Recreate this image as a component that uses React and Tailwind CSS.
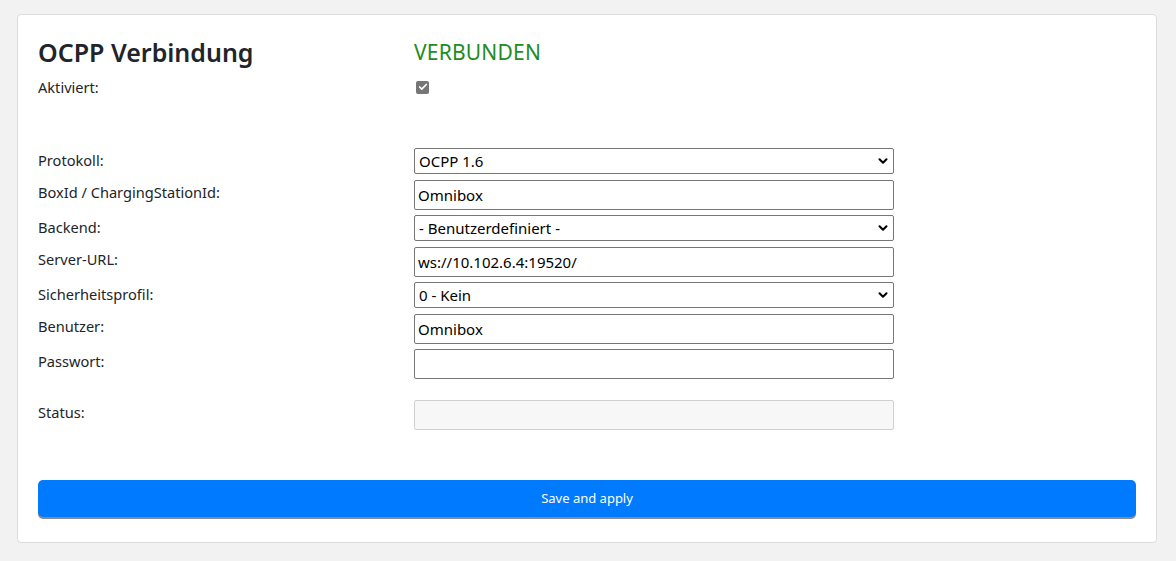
import { ChevronDown, Check } from "lucide-react"

const font = { fontFamily: '"Noto Sans", "Open Sans", sans-serif' }

const SelectBox = ({ value }) => (
  <div className="relative h-[26px] w-[480px] border border-[#767676] rounded-[2px] bg-white flex items-center pl-[4px] text-[15px] text-black">
    <span>{value}</span>
    <ChevronDown className="absolute right-[3px] top-[5px] w-[14px] h-[14px]" strokeWidth={3.5} />
  </div>
)

const TextBox = ({ value, disabled }) => (
  <div
    className={
      disabled
        ? "h-[30px] w-[480px] border border-[#d0d0d0] rounded-[2px] bg-[#f7f7f7]"
        : "h-[30px] w-[480px] border border-[#767676] rounded-[2px] bg-white flex items-center pl-[3px] text-[15px] text-black"
    }
  >
    {value}
  </div>
)

const Row = ({ label, children, className }) => (
  <div className={"flex " + (className || "")}>
    <div className="w-[376px] text-[14.6px] text-[#212529] pt-[2px]">{label}</div>
    {children}
  </div>
)

const App = () => {
  return (
    <div className="min-h-screen bg-[#f2f2f2] pt-[14px] pl-[17px] pr-[19px] pb-[18px]" style={font}>
      <div className="bg-white border border-[#dcdcdc] rounded-[4px] h-[529px] px-[20px] pt-[22px]">
        <div className="flex items-center h-[32px]">
          <h2 className="w-[376px] text-[25px] font-semibold text-[#212529]">OCPP Verbindung</h2>
          <div className="text-[21px] text-[#228b22] tracking-[0.2px]">VERBUNDEN</div>
        </div>
        <div className="flex mt-[10px] h-[18px] items-center">
          <div className="w-[376px] text-[14.6px] text-[#212529]">Aktiviert:</div>
          <span className="ml-[2px] -mt-[2px] w-[13px] h-[13px] rounded-[2px] bg-[#767676] flex items-center justify-center">
            <Check className="w-[10px] h-[10px] text-white" strokeWidth={4} />
          </span>
        </div>

        <div className="mt-[51px] flex flex-col">
          <Row label="Protokoll:">
            <SelectBox value="OCPP 1.6" />
          </Row>
          <Row label="BoxId / ChargingStationId:" className="mt-[6px]">
            <TextBox value="Omnibox" />
          </Row>
          <Row label="Backend:" className="mt-[5px]">
            <SelectBox value="- Benutzerdefiniert -" />
          </Row>
          <Row label="Server-URL:" className="mt-[6px]">
            <TextBox value="ws://10.102.6.4:19520/" />
          </Row>
          <Row label="Sicherheitsprofil:" className="mt-[5px]">
            <SelectBox value="0 - Kein" />
          </Row>
          <Row label="Benutzer:" className="mt-[6px]">
            <TextBox value="Omnibox" />
          </Row>
          <Row label="Passwort:" className="mt-[5px]">
            <TextBox value="" />
          </Row>
          <Row label="Status:" className="mt-[21px]">
            <TextBox value="" disabled />
          </Row>
        </div>

        <button className="mt-[50px] w-full h-[37px] bg-[#007bff] text-white text-[13px] rounded-[5px] shadow-[0_2px_0_#8a8a8a]">
          Save and apply
        </button>
      </div>
    </div>
  )
}

export default App
